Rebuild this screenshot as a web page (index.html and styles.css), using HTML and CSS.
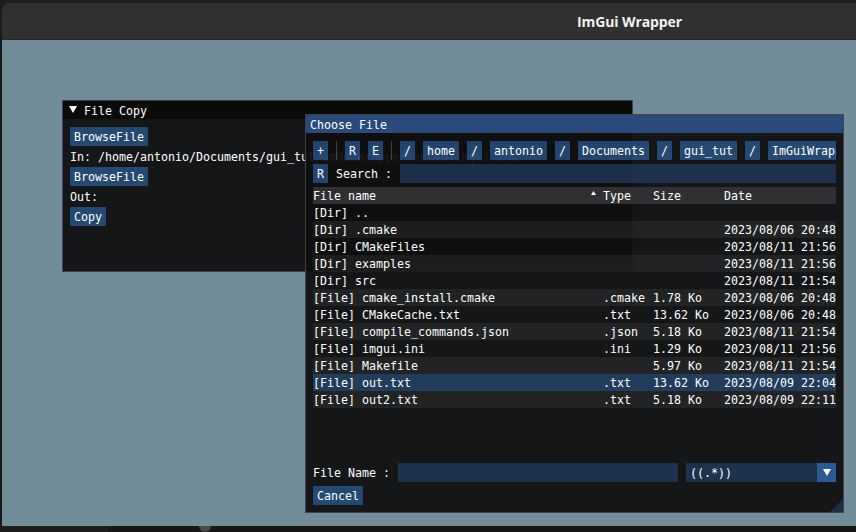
FILE: index.html
```html
<!DOCTYPE html>
<html>
<head>
<meta charset="utf-8">
<title>ImGui Wrapper</title>
<link rel="stylesheet" href="styles.css">
</head>
<body>
<div class="screen">
  <div class="topstrip"></div>
  <div class="app">
    <div class="app-title">ImGui Wrapper</div>
    <div class="desktop">

      <div class="win win-copy">
        <div class="win-title inactive">
          <svg class="collapse" width="8" height="7" viewBox="0 0 8 7"><polygon points="0,0 8,0 4,7" fill="#fff"/></svg>
          <span>File Copy</span>
        </div>
        <div class="win-body stack">
          <span class="btn">BrowseFile</span>
          <div class="text">In: /home/antonio/Documents/gui_tut/ImGuiWrapper/build/imgui.ini</div>
          <span class="btn">BrowseFile</span>
          <div class="text">Out:</div>
          <span class="btn">Copy</span>
        </div>
      </div>

      <div class="win win-choose">
        <div class="win-title active"><span>Choose File</span></div>
        <div class="win-body stack">
          <div class="row pathrow">
            <span class="btn">+</span>
            <span class="vsep"></span>
            <span class="btn">R</span>
            <span class="btn">E</span>
            <span class="vsep"></span>
            <span class="btn">/</span>
            <span class="btn">home</span>
            <span class="btn">/</span>
            <span class="btn">antonio</span>
            <span class="btn">/</span>
            <span class="btn">Documents</span>
            <span class="btn">/</span>
            <span class="btn">gui_tut</span>
            <span class="btn">/</span>
            <span class="btn">ImGuiWrapper</span>
          </div>
          <div class="row">
            <span class="btn">R</span>
            <span class="label">Search :</span>
            <span class="input grow"></span>
          </div>

          <div class="table">
            <div class="trow thead">
              <div class="cell namehead"><span>File name</span><svg class="sortarrow" width="5" height="4" viewBox="0 0 5 4"><polygon points="0,4 2.5,0 5,4" fill="#fff"/></svg></div>
              <div class="cell">Type</div>
              <div class="cell">Size</div>
              <div class="cell">Date</div>
            </div>
            <div class="trow"><div class="cell">[Dir] ..</div><div class="cell"></div><div class="cell"></div><div class="cell"></div></div>
            <div class="trow alt"><div class="cell">[Dir] .cmake</div><div class="cell"></div><div class="cell"></div><div class="cell">2023/08/06 20:48</div></div>
            <div class="trow"><div class="cell">[Dir] CMakeFiles</div><div class="cell"></div><div class="cell"></div><div class="cell">2023/08/11 21:56</div></div>
            <div class="trow alt"><div class="cell">[Dir] examples</div><div class="cell"></div><div class="cell"></div><div class="cell">2023/08/11 21:56</div></div>
            <div class="trow"><div class="cell">[Dir] src</div><div class="cell"></div><div class="cell"></div><div class="cell">2023/08/11 21:54</div></div>
            <div class="trow alt"><div class="cell">[File] cmake_install.cmake</div><div class="cell">.cmake</div><div class="cell">1.78 Ko</div><div class="cell">2023/08/06 20:48</div></div>
            <div class="trow"><div class="cell">[File] CMakeCache.txt</div><div class="cell">.txt</div><div class="cell">13.62 Ko</div><div class="cell">2023/08/06 20:48</div></div>
            <div class="trow alt"><div class="cell">[File] compile_commands.json</div><div class="cell">.json</div><div class="cell">5.18 Ko</div><div class="cell">2023/08/11 21:54</div></div>
            <div class="trow"><div class="cell">[File] imgui.ini</div><div class="cell">.ini</div><div class="cell">1.29 Ko</div><div class="cell">2023/08/11 21:56</div></div>
            <div class="trow alt"><div class="cell">[File] Makefile</div><div class="cell"></div><div class="cell">5.97 Ko</div><div class="cell">2023/08/11 21:54</div></div>
            <div class="trow selected"><div class="cell">[File] out.txt</div><div class="cell">.txt</div><div class="cell">13.62 Ko</div><div class="cell">2023/08/09 22:04</div></div>
            <div class="trow alt"><div class="cell">[File] out2.txt</div><div class="cell">.txt</div><div class="cell">5.18 Ko</div><div class="cell">2023/08/09 22:11</div></div>
          </div>

          <div class="row">
            <span class="label">File Name :</span>
            <span class="input grow"></span>
            <span class="combo">
              <span class="combo-text">((.*))</span>
              <span class="combo-arrow"><svg width="8" height="7" viewBox="0 0 8 7"><polygon points="0,0 8,0 4,7" fill="#fff"/></svg></span>
            </span>
          </div>
          <span class="btn">Cancel</span>
        </div>
        <div class="grip"></div>
      </div>

    </div>
  </div>
  <div class="bottomstrip">
    <span class="bs-left"></span>
    <span class="bs-dot"></span>
  </div>
</div>
</body>
</html>
```

FILE: styles.css
```css
* {
  box-sizing: border-box;
  margin: 0;
  padding: 0;
}

html, body {
  width: 856px;
  height: 532px;
  overflow: hidden;
  background: #1b1b1b;
}

body {
  font-family: "DejaVu Sans Mono", "Liberation Mono", monospace;
  font-size: 11.63px;
  line-height: 13px;
  color: #ffffff;
}

.screen {
  display: flex;
  flex-direction: column;
  height: 532px;
}

.topstrip {
  height: 3px;
  background: #1c1c1c;
}

.app {
  margin-left: 2px;
  display: flex;
  flex-direction: column;
}

.app-title {
  height: 37px;
  background: #303030;
  border-top-left-radius: 7px;
  border-bottom: 1px solid #272727;
  padding-left: 575px;
  display: flex;
  align-items: center;
  font-family: "Open Sans", "Noto Sans", sans-serif;
  font-weight: 700;
  font-size: 14px;
  color: #f2f2f2;
  letter-spacing: -0.1px;
}

.desktop {
  height: 486px;
  background: #738c99;
  position: relative;
  overflow: hidden;
}

.bottomstrip {
  flex: 1;
  background: #171717;
  display: flex;
  align-items: flex-start;
}

.bs-left {
  width: 108px;
  height: 100%;
  background: #1d1d1d;
}

.bs-dot {
  width: 12px;
  height: 6px;
  margin-left: 91px;
  border-radius: 0 0 6px 6px;
  background: #4a4a4a;
}

/* ImGui windows */
.win {
  position: absolute;
  background: rgba(15, 15, 15, 0.94);
  border: 1px solid rgba(110, 110, 128, 0.5);
  display: flex;
  flex-direction: column;
  overflow: hidden;
}

.win-copy {
  left: 60px;
  top: 60px;
  width: 571px;
  height: 172px;
}

.win-choose {
  left: 303px;
  top: 74px;
  width: 539px;
  height: 399px;
}

.win-title {
  height: 18px;
  padding: 4px 4px 0;
  display: flex;
  align-items: flex-start;
  white-space: nowrap;
  flex-shrink: 0;
}

.win-title.inactive {
  background: #0a0a0a;
  padding-left: 6px;
}

.win-title.active {
  background: #294a7a;
}

.collapse {
  margin-top: 1px;
  margin-right: 7px;
}

.win-body {
  padding: 8px 7px 7px;
  flex: 1;
  min-height: 0;
}

.stack {
  display: flex;
  flex-direction: column;
  align-items: flex-start;
  gap: 4px;
}

.text {
  white-space: nowrap;
  height: 13px;
  padding-top: 1px;
}

.btn {
  display: inline-block;
  flex-shrink: 0;
  height: 19px;
  padding: 4px 4px 2px;
  background: rgba(66, 150, 250, 0.40);
  white-space: nowrap;
}

.row {
  display: flex;
  gap: 8px;
  width: 100%;
  white-space: nowrap;
  overflow: hidden;
  flex-shrink: 0;
}

.vsep {
  width: 1px;
  align-self: stretch;
  background: rgba(110, 110, 128, 0.5);
  flex-shrink: 0;
}

.label {
  padding-top: 4px;
  flex-shrink: 0;
}

.input {
  height: 19px;
  background: rgba(41, 74, 122, 0.54);
}

.grow {
  flex: 1;
}

/* table */
.table {
  width: 100%;
  height: 272px;
  display: flex;
  flex-direction: column;
  flex-shrink: 0;
}

.trow {
  display: grid;
  grid-template-columns: 290px 50px 71px 112px;
  height: 17px;
  padding: 3px 0 1px;
  flex-shrink: 0;
}

.trow.thead {
  background: #303033;
}

.trow.alt {
  background: rgba(255, 255, 255, 0.06);
}

.trow.selected {
  background: rgba(66, 150, 250, 0.31);
}

.cell {
  overflow: hidden;
  white-space: nowrap;
}

.namehead {
  display: flex;
  justify-content: space-between;
  align-items: flex-start;
  padding-right: 7px;
}

.sortarrow {
  margin-top: 1px;
}

/* combo */
.combo {
  width: 150px;
  height: 19px;
  display: flex;
  flex-shrink: 0;
  background: rgba(41, 74, 122, 0.54);
}

.combo-text {
  flex: 1;
  padding: 4px 4px 2px;
}

.combo-arrow {
  width: 19px;
  height: 19px;
  background: rgba(66, 150, 250, 0.40);
  display: flex;
  align-items: center;
  justify-content: center;
}

.grip {
  position: absolute;
  right: 0;
  bottom: 0;
  width: 13px;
  height: 13px;
  background: rgba(66, 150, 250, 0.20);
  clip-path: polygon(100% 0, 100% 100%, 0 100%);
}
```
